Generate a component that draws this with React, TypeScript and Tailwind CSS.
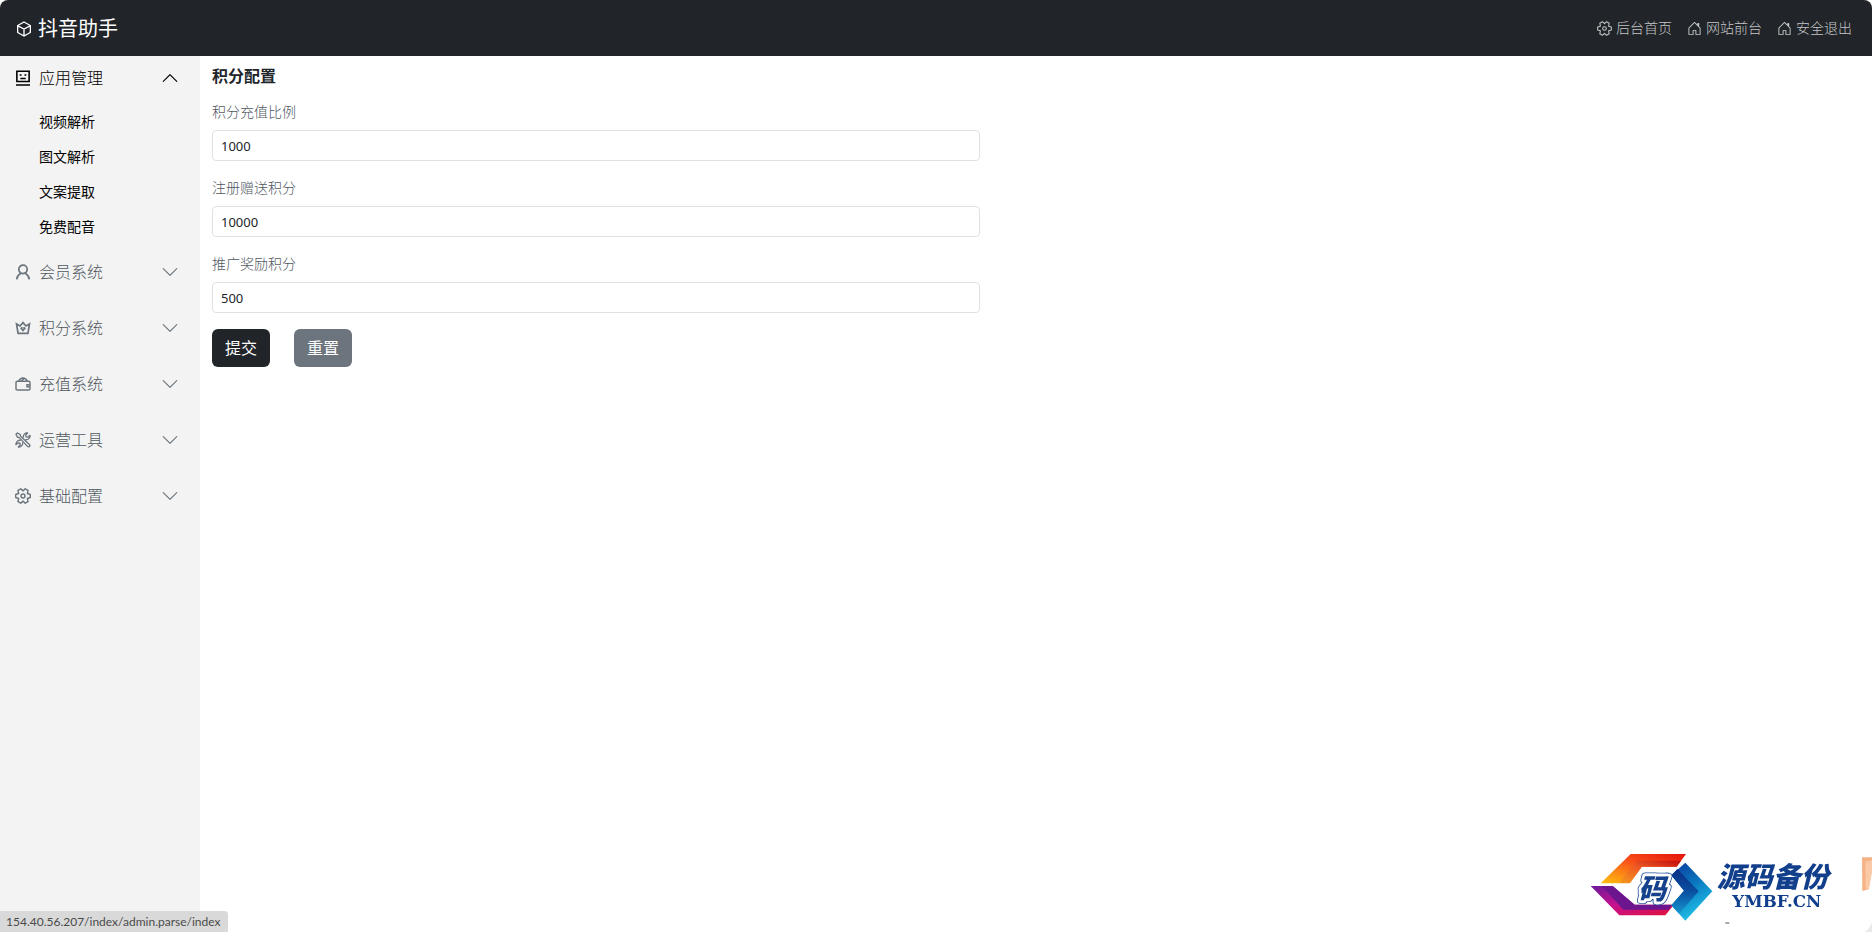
import { useState, ReactNode } from 'react';
import { BsChevronDown, BsHouseDoor } from 'react-icons/bs';

const strokeProps = {
  viewBox: '0 0 24 24',
  fill: 'none',
  stroke: 'currentColor',
  strokeWidth: 2,
  'aria-hidden': true,
};

const CubeIcon = () => (
  <svg {...strokeProps} className="w-4 h-4 shrink-0">
    <path d="M12 1.5 21.5 6.800v10.400l-9.500 5.300-9.500-5.300V6.800zM2.900 7.200 12 12l9.100-4.800M12 12v10" />
  </svg>
);

const FaceIcon = () => (
  <svg {...strokeProps} strokeWidth={2.4} className="w-4 h-4 shrink-0">
    <path d="M2.800 1.800h18.400v15.400H2.800zM1.500 22.400h21" />
    <path d="M7 7.500h2.800M14.200 7.500H17M8 12.800h8" />
  </svg>
);

const UserIcon = () => (
  <svg {...strokeProps} strokeWidth={2.6} className="w-4 h-4 shrink-0">
    <circle cx="12" cy="8" r="6.3" />
    <path d="M2.500 23c.6-4.300 2.800-7.200 6.300-9M21.500 23c-.6-4.300-2.800-7.200-6.300-9" />
  </svg>
);

const CrownIcon = () => (
  <svg {...strokeProps} strokeWidth={2.6} className="w-4 h-4 shrink-0">
    <path d="M4.600 20 2.300 6l5.200 3L12 4l4.500 5 5.200-3-2.300 14z" />
    <path d="m8.500 11.500 3.500 4 3.500-4" />
    <path d="M9 11.500h6" strokeWidth="1.200" />
  </svg>
);

const WalletIcon = () => (
  <svg {...strokeProps} strokeWidth={2.2} className="w-4 h-4 shrink-0">
    <rect x="1.500" y="8" width="21" height="13" rx="2" />
    <path d="M5.500 8C7 4.500 9.300 3 12 3s5 1.500 6.500 5M9.500 8 13 4.500" />
    <path d="M22 13h-4v3h4" />
  </svg>
);

const ToolsIcon = () => (
  <svg {...strokeProps} strokeLinejoin="round" className="w-4 h-4 shrink-0">
    {/* screwdriver */}
    <path d="M1.500 3.500 3.500 1.500 7.500 3.500 8.500 6.500 21.500 18.700C23.500 21 21 23.500 18.700 21.500L6.500 8.500 3.500 7.500z" />
    {/* wrench */}
    <path d="M12.500 8.500C12 4.500 15 .8 19 1.500L16.200 4.500 16.600 7.400 19.500 7.800 22.500 5C23.200 9 19.500 12 15.500 11.500M8.500 12.500C4.500 12 .8 15 1.500 19L4.500 16.200 7.400 16.600 7.800 19.500 5 22.500C9 23.200 12 19.500 11.500 15.500" />
  </svg>
);

const GearIcon = ({ thin = false }: { thin?: boolean }) => (
  <svg {...strokeProps} viewBox="0.500 0.500 23 23" strokeWidth={thin ? 1.6 : 2.1} strokeLinejoin="round" className={thin ? 'w-[15px] h-[15px] shrink-0' : 'w-4 h-4 shrink-0'}>
    <path d="M22.500 9.800v4.400L18.300 15.600l.9 4.500-4 2.300-3.200-3-3.200 3-4-2.300.9-4.500-4.200-1.400V9.800L5.700 8.400l-.9-4.500 4-2.300 3.200 3 3.200-3 4 2.300-.9 4.500z" />
    <circle cx="12" cy="12" r="2.8" />
  </svg>
);

type MenuItem = { title: string; icon: ReactNode; children?: string[] };

const menus: MenuItem[] = [
  { title: '应用管理', icon: <FaceIcon />, children: ['视频解析', '图文解析', '文案提取', '免费配音'] },
  { title: '会员系统', icon: <UserIcon /> },
  { title: '积分系统', icon: <CrownIcon /> },
  { title: '充值系统', icon: <WalletIcon /> },
  { title: '运营工具', icon: <ToolsIcon /> },
  { title: '基础配置', icon: <GearIcon /> },
];

const topLinks = [
  { title: '后台首页', icon: <GearIcon thin /> },
  { title: '网站前台', icon: <BsHouseDoor size={15} /> },
  { title: '安全退出', icon: <BsHouseDoor size={15} /> },
];

const fields = [
  { id: 'ratio', label: '积分充值比例', value: '1000' },
  { id: 'register', label: '注册赠送积分', value: '10000' },
  { id: 'invite', label: '推广奖励积分', value: '500' },
];

function Watermark() {
  return (
    <svg viewBox="0 0 876 276" className="fixed right-0 bottom-0 w-[292px] h-[92px] pointer-events-none" aria-hidden="true">
      <defs>
        <linearGradient id="wm-warm" x1="1" y1="0" x2="0" y2="1">
          <stop offset="0" stopColor="#e3120b" />
          <stop offset="0.45" stopColor="#f9501a" />
          <stop offset="1" stopColor="#ffc20e" />
        </linearGradient>
        <linearGradient id="wm-warm-in" x1="1" y1="0" x2="0" y2="1">
          <stop offset="0" stopColor="#c00d0d" />
          <stop offset="0.5" stopColor="#ef5a24" />
          <stop offset="1" stopColor="#f49a1c" />
        </linearGradient>
        <linearGradient id="wm-pink" x1="0" y1="0" x2="1" y2="1">
          <stop offset="0" stopColor="#6a1b9a" />
          <stop offset="0.45" stopColor="#c4128f" />
          <stop offset="1" stopColor="#e0103a" />
        </linearGradient>
        <linearGradient id="wm-blue" x1="0" y1="0" x2="0.4" y2="1">
          <stop offset="0" stopColor="#0a3a9c" />
          <stop offset="0.5" stopColor="#0b78c0" />
          <stop offset="1" stopColor="#1fc0e6" />
        </linearGradient>
        <linearGradient id="wm-blue-in" x1="0" y1="0" x2="0" y2="1">
          <stop offset="0" stopColor="#0a2f86" />
          <stop offset="0.5" stopColor="#0a4fa0" />
          <stop offset="1" stopColor="#1596cf" />
        </linearGradient>
      </defs>
      <polygon points="152,42 318,42 290,80 180,80 117,130 62,130" fill="url(#wm-warm)" />
      <polygon points="170,62 303,62 290,80 186,80 150,130 117,130" fill="url(#wm-warm-in)" />
      <polygon points="32,138 98,138 164,194 282,194 256,226 118,226" fill="url(#wm-pink)" />
      <polygon points="66,138 98,138 164,194 276,194 266,209 130,209" fill="#6b168f" />
      <polygon points="316,68 397,154 316,242 274,196 312,152 274,106" fill="url(#wm-blue)" />
      <polygon points="292,87 356,154 297,221 274,196 312,152 274,106" fill="url(#wm-blue-in)" />
      <g fontFamily='"Noto Sans CJK SC", sans-serif' fontWeight="900" fontStyle="italic" fontSize="84" textAnchor="middle" strokeLinejoin="round">
        <text x="217" y="177" fill="#1d4a94" stroke="#1d4a94" strokeWidth="22">码</text>
        <text x="217" y="177" fill="#fff" stroke="#fff" strokeWidth="17">码</text>
        <text x="217" y="177" fill="#16428d">码</text>
      </g>
      <text x="410" y="140" fontFamily='"Noto Sans CJK SC", sans-serif' fontWeight="900" fontStyle="italic" fontSize="84" fill="#123f8c">源码备份</text>
      <text x="457" y="202" fontFamily='"DejaVu Serif", serif' fontWeight="700" fontSize="50" fill="#123f8c">YMBF.CN</text>
      <path d="M846 52h30v40l-10 56-19 5z" fill="#f6b284" />
      <path d="M856 66l20-6v34l-9 50-10 4z" fill="#fac9a5" />
      <path d="M436 249h12" stroke="#555" strokeWidth="3" />
      <path d="M876 246c-4 14-12 24-22 30h22z" fill="#e9e9e9" />
    </svg>
  );
}

export default function App() {
  const [open, setOpen] = useState('应用管理');

  return (
    <div className="flex flex-col min-h-screen bg-white text-[#212529] font-['Noto_Sans','Noto_Sans_CJK_SC',sans-serif]">
      <header className="flex items-center justify-between h-14 px-4 pr-5 rounded-t-lg bg-[#212529]">
        <a href="#" className="flex items-center gap-1.5 pt-0.5 text-xl text-white">
          <CubeIcon />
          抖音助手
        </a>
        <nav className="flex gap-[15px]">
          {topLinks.map(l => (
            <a key={l.title} href="#" className="flex items-center gap-1 text-sm font-light text-[#c4c6c8]">
              {l.icon}
              {l.title}
            </a>
          ))}
        </nav>
      </header>

      <div className="flex grow">
        <aside className="w-[200px] shrink-0 bg-[#f3f3f3]">
          {menus.map(m => {
            const active = open === m.title;
            return (
              <div key={m.title}>
                <button
                  type="button"
                  aria-expanded={active}
                  onClick={() => setOpen(active ? '' : m.title)}
                  className={`flex items-center gap-2 w-full pl-[15px] pr-[21px] text-base font-light ${active ? 'h-11 text-black' : 'h-14 text-[#6c757d]'}`}
                >
                  {m.icon}
                  <span className={active ? 'text-black' : 'text-[#4f585f]'}>{m.title}</span>
                  <BsChevronDown size={18} className={`ml-auto ${active ? 'rotate-180' : ''}`} />
                </button>
                {active && m.children && (
                  <ul className="pt-1 text-sm text-black">
                    {m.children.map(c => (
                      <li key={c}>
                        <a href="#" className="flex items-center h-[35px] pl-[39px]">{c}</a>
                      </li>
                    ))}
                  </ul>
                )}
              </div>
            );
          })}
        </aside>

        <main className="grow px-3 pt-2">
          <h1 className="text-base font-bold">积分配置</h1>
          <form className="w-full max-w-3xl pt-[13px]" onSubmit={e => e.preventDefault()}>
            {fields.map(f => (
              <div key={f.id} className="mb-4">
                <label htmlFor={f.id} className="block h-[29px] pt-px text-sm font-light text-[#4f585f]">{f.label}</label>
                <input
                  id={f.id}
                  defaultValue={f.value}
                  className="block w-full h-[31px] px-2 text-[13px] rounded-sm border border-[#dee2e6] bg-white"
                />
              </div>
            ))}
            <div className="flex gap-6">
              <button type="submit" className="h-[38px] px-[13px] rounded-md bg-[#212529] text-white">提交</button>
              <button type="reset" className="h-[38px] px-[13px] rounded-md bg-[#6c757d] text-white">重置</button>
            </div>
          </form>
        </main>
      </div>

      <Watermark />
      <div className="fixed left-0 bottom-0 h-[21px] pl-1.5 pr-2 rounded-tr-sm bg-[#d9d9d9] text-xs leading-[22px] text-[#4a4a4a] font-['Lato',sans-serif]">
        154.40.56.207/index/admin.parse/index
      </div>
    </div>
  );
}
